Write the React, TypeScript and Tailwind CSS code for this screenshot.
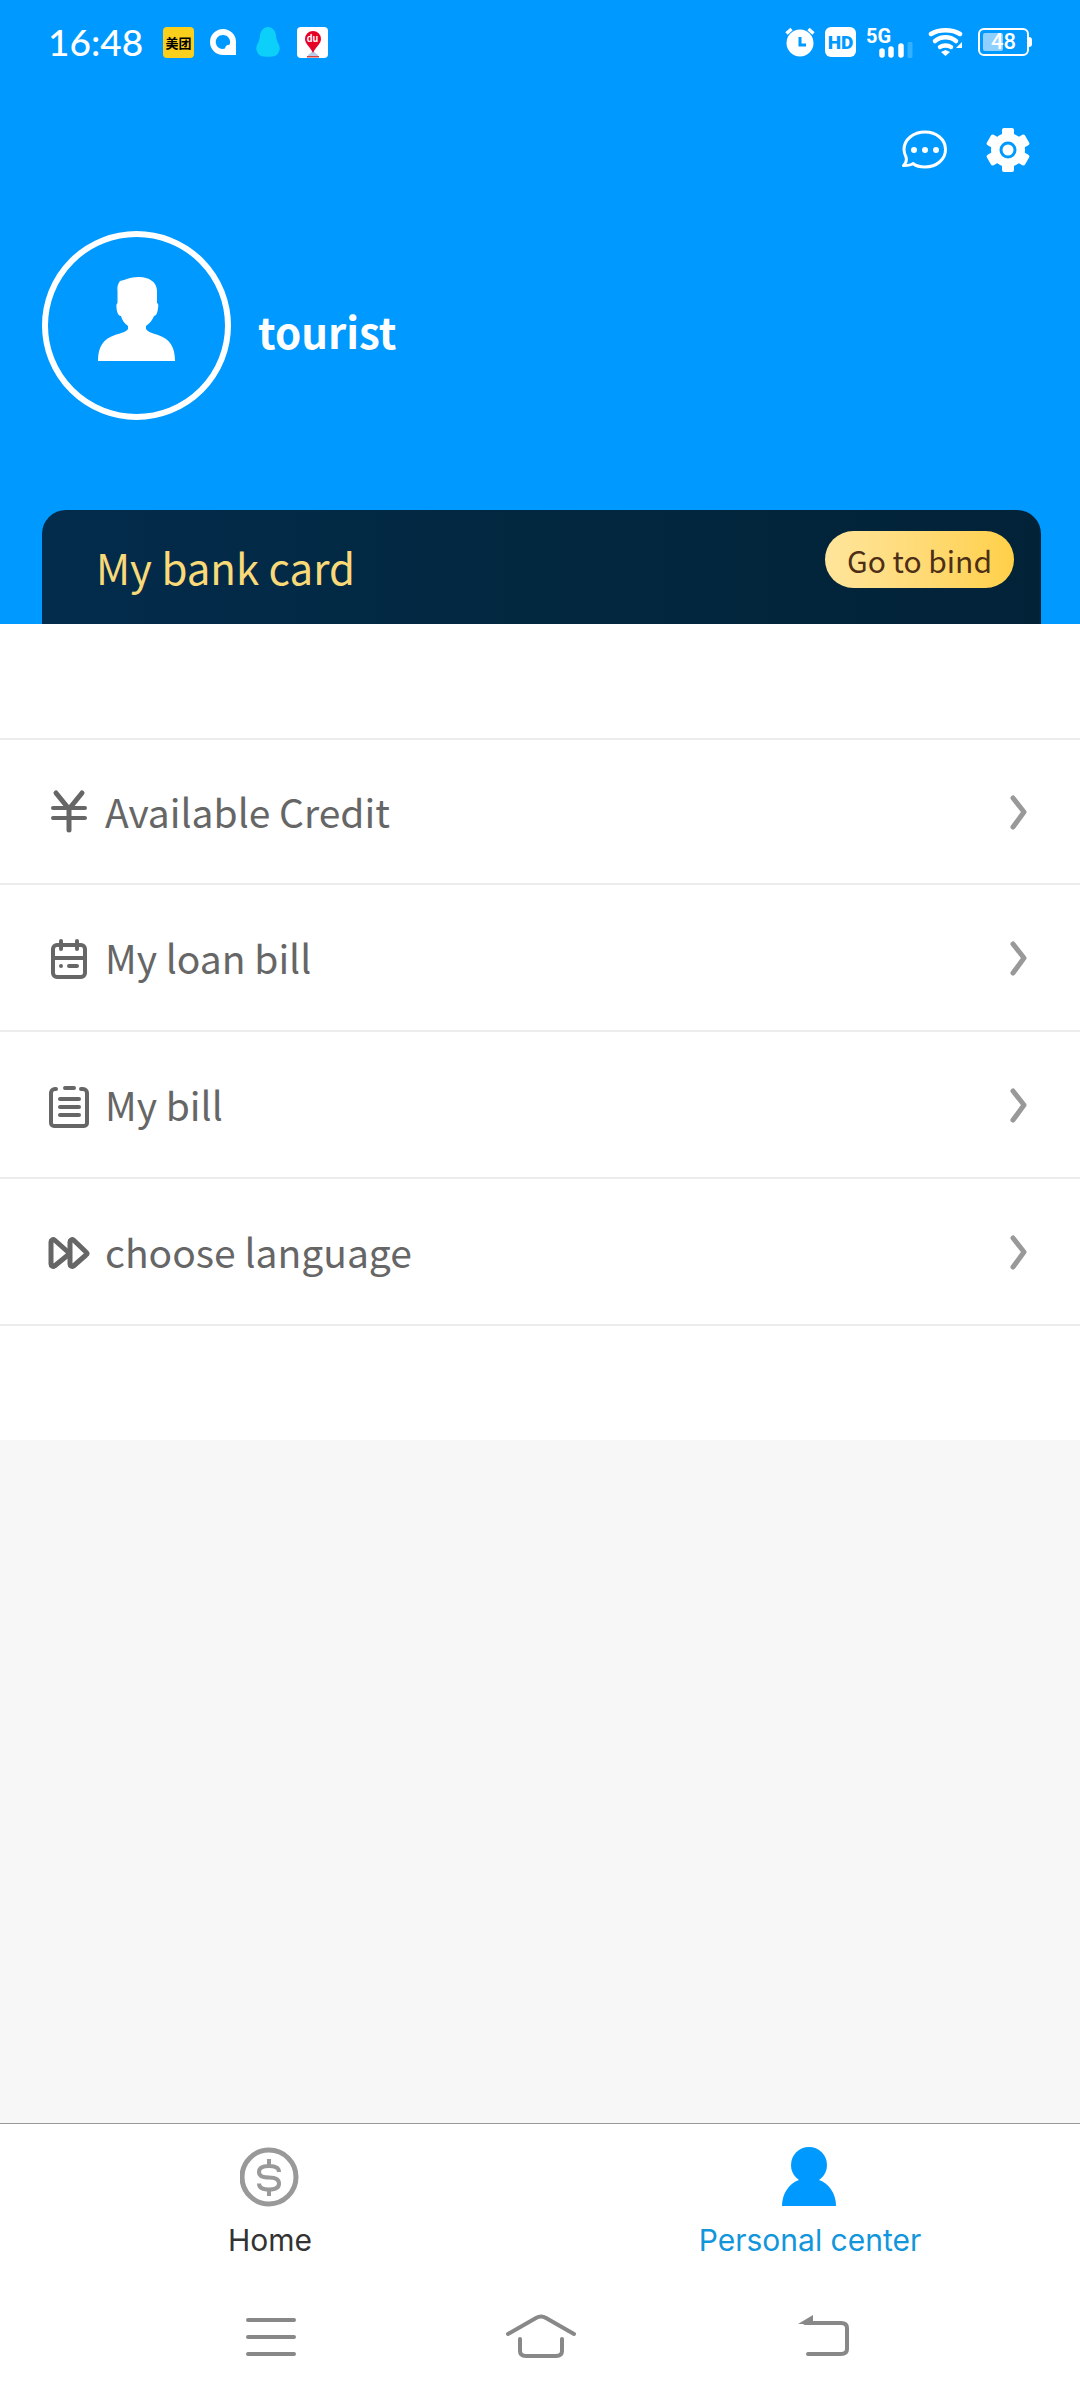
import clsx from 'clsx'

interface RowProps {
  label: string
  icon: React.ReactNode
}

function StatusBar() {
  return (
    <div className="flex h-[84px] items-center justify-between px-12 text-white">
      <div className="flex items-center">
        <span className="w-[115px] font-['Lato','Liberation_Sans',sans-serif] text-[37px] leading-10 font-medium">16:48</span>
        <span className="flex size-[31px] items-center justify-center rounded-sm bg-[#fbd01c] font-['Noto_Sans_CJK_SC',sans-serif] text-[13px] leading-none font-bold text-black">
          美团
        </span>
        <svg className="ml-4 h-[26px] w-[26px]" viewBox="0 0 26 26">
          <path
            fill="currentColor"
            fillRule="evenodd"
            d="M13 0a13 13 0 0 1 13 13v13H13A13 13 0 0 1 13 0Zm0 6a7 7 0 1 0 2 13.600c.2-2.500 2-4 4.500-3.800A7 7 0 0 0 13 6Z"
          />
        </svg>
        <svg className="ml-5 h-8 w-6" viewBox="0 0 24 32">
          <path
            fill="#0cd0fa"
            d="M12 1c4 0 7 3 8 8 0 3 1 6 3 10 1 3 1 5 0 6-1 3-2 4-4 5-2 1-12 1-14 0-2-1-3-2-4-5-1-1-1-3 0-6 2-4 3-7 3-10 1-5 4-8 8-8Z"
          />
        </svg>
        <span className="relative ml-[17px] flex size-[31px] justify-center rounded-sm bg-white">
          <svg className="mt-1 h-[27px] w-[18px]" viewBox="0 0 18 27">
            <path fill="#b9cbe6" d="M4 24l5-4 5 4v2H4Z" />
            <path fill="#d6433c" d="M3 25h12v1.500H3Z" />
            <path fill="#e60026" d="M9 0a8 8 0 0 1 8 8c0 5-5.500 8-8 14C6.500 16 1 13 1 8a8 8 0 0 1 8-8Z" />
          </svg>
          <span className="absolute top-[7px] text-[9px] leading-[9px] font-bold">du</span>
        </span>
      </div>

      <div className="flex items-center">
        <svg className="h-[30px] w-[30px]" viewBox="0 0 30 30">
          <circle cx="15" cy="16" r="13.500" fill="currentColor" />
          <path d="M1.500 6.500l5-4.500M28.500 6.500l-5-4.500" stroke="currentColor" strokeWidth="3.500" />
          <path d="M15 10v8h6" fill="none" stroke="#0099ff" strokeWidth="3" />
        </svg>
        <span className="ml-[10px] flex h-[30px] w-[31px] items-center justify-center rounded-md bg-white font-['Roboto',sans-serif] text-[19px] leading-none font-black text-[#0099ff]">
          HD
        </span>
        <span className="relative ml-[10px] h-8 w-[50px] font-['Roboto',sans-serif] text-[20px] leading-5 font-bold">
          5G
          <svg className="absolute right-0 bottom-0 h-4 w-[37px]" viewBox="0 0 37 16">
            <path d="M3 9v4M12 7v6M22 4v9" stroke="currentColor" strokeWidth="5.500" strokeLinecap="round" />
            <path d="M31 2v12" stroke="#33b0ff" strokeWidth="5" strokeLinecap="round" />
          </svg>
        </span>
        <svg className="ml-3 h-7 w-[36px]" viewBox="0 0 36 28">
          <g fill="none" stroke="currentColor" strokeWidth="4.500" strokeLinecap="round">
            <path d="M3 6c8-5 21-5 29 0" />
            <path d="M7 13c6-5 15-5 21 0" />
            <path d="M12 19c3-2 8-2 11 0" />
          </g>
          <path d="M13 24l4.500-2 4.500 2-4.500 4Z" fill="currentColor" />
          <path d="M34 14v6h-6Z" fill="currentColor" />
        </svg>
        <span className="relative ml-[14px] flex h-7 w-[51px] items-center justify-center overflow-hidden rounded-md border-2 border-white font-['Roboto',sans-serif] text-[22px] leading-none font-medium">
          <span className="absolute top-[3px] left-[3px] h-[18px] w-5 rounded-xs bg-[#8fd0ff]" />
          <span className="relative">48</span>
        </span>
        <span className="h-[10px] w-[3px] rounded-r-sm bg-white" />
      </div>
    </div>
  )
}

function Header() {
  return (
    <header className="bg-[#0099ff]">
      <StatusBar />

      {/* Message and settings */}
      <div className="flex items-center justify-end gap-[39px] pt-11 pr-[50px] text-white">
        <button aria-label="Messages" className="h-11 w-[46px]">
          <svg className="h-11 w-[46px]" viewBox="0 0 46 44">
            <path
              d="M24 4c11.500 0 20.500 7.500 20.500 17.500S35.500 39 24 39c-5 0-9-1-12-3.500-2 2-5 2-9.500 2C5 35 6 32 5 29c-1-2-2-4-2-7.500C3 11.500 12.500 4 24 4Z"
              fill="none"
              stroke="currentColor"
              strokeWidth="3"
              strokeLinejoin="round"
            />
            <g fill="currentColor">
              <circle cx="13" cy="22" r="3" />
              <circle cx="24" cy="22" r="3" />
              <circle cx="35" cy="22" r="3" />
            </g>
          </svg>
        </button>
        <button aria-label="Settings" className="size-11">
          <svg className="size-11" viewBox="0 0 44 44">
            <g fill="currentColor">
              <circle cx="22" cy="22" r="17" />
              <rect x="16" y="0" width="12" height="44" rx="2" />
              <rect x="16" y="0" width="12" height="44" rx="2" transform="rotate(60 22 22)" />
              <rect x="16" y="0" width="12" height="44" rx="2" transform="rotate(120 22 22)" />
            </g>
            <circle cx="22" cy="22" r="7" fill="none" stroke="#0099ff" strokeWidth="3" />
          </svg>
        </button>
      </div>

      {/* Profile */}
      <div className="flex items-center gap-[27px] pt-[59px] pl-[42px]">
        <div className="flex size-[189px] items-center justify-center rounded-full border-6 border-white pb-[14px]">
          <svg className="h-[84px] w-[78px] text-white" viewBox="0 0 78 84">
            <path
              fill="currentColor"
              d="M22 4l4-1c5-2 9-3 15-3 10 0 18 5 18 14v12c1.500 1 1.500 2 1 5-.4 4-1.500 8-4 8-1.500 4-4 7-8 10v3c2 3 6 4 12 6 12 4 17 12 17 26H0c0-14 5-22 17-26 6-2 11-3 13-6v-3c-4-3-6-6-7-10-3 0-4-4-4.500-8-.3-3 0-4 1-5V14c-.5-3 0-7 2.500-10Z"
            />
          </svg>
        </div>
        <h1 className="pt-[10px] text-[42px] leading-[60px] font-bold text-white">tourist</h1>
      </div>

      {/* Bank card */}
      <div className="mt-[90px] mr-[39px] ml-[42px] flex h-[114px] items-start justify-between rounded-t-3xl bg-linear-to-r from-[#032b4c] via-[#02283f] to-[#022238] pt-[21px] pr-[27px] pl-[54px]">
        <h2 className="pt-1 text-[42px] leading-[64px] text-[#f9d978]">My bank card</h2>
        <button className="h-[57px] rounded-full bg-linear-to-r from-[#ffe59b] to-[#ffd047] px-[22px] text-[30px] leading-[56px] text-[#4c2f16]">
          Go to bind
        </button>
      </div>
    </header>
  )
}

function Row({ label, icon }: RowProps) {
  return (
    <li className="h-[147px] border-b-2 border-[#ececec] first:border-t-2">
      <a href="#" className="flex h-full items-center pr-[51px] pl-12 text-[#666]">
        {icon}
        <span className="ml-[15px] flex-1 pb-[2px] text-[39px] leading-[60px]">{label}</span>
        <svg className="h-9 w-5" viewBox="0 0 20 36">
          <path
            d="M4 4l11 14L4 33"
            fill="none"
            stroke="#999"
            strokeWidth="5"
            strokeLinecap="round"
            strokeLinejoin="round"
          />
        </svg>
      </a>
    </li>
  )
}

const iconProps = {
  className: 'h-[46px] w-[42px]',
  viewBox: '0 -4 42 46',
  fill: 'none',
  stroke: 'currentColor',
  strokeWidth: 4,
  strokeLinecap: 'round',
  strokeLinejoin: 'round',
} as const

const rows: RowProps[] = [
  {
    label: 'Available Credit',
    icon: (
      <svg {...iconProps}>
        <path d="M8 0l13 16L34 0M21 16v21" strokeWidth="5" />
        <path d="M5 15h32M5 25h32" />
      </svg>
    ),
  },
  {
    label: 'My loan bill',
    icon: (
      <svg {...iconProps}>
        <rect x="5" y="6" width="32" height="32" rx="4" />
        <path d="M5 19h32M13 2v8M29 2v8M13 27h0M21 27h8" />
      </svg>
    ),
  },
  {
    label: 'My bill',
    icon: (
      <svg {...iconProps}>
        <path d="M8 3H7a4 4 0 0 0-4 4v30a3 3 0 0 0 3 3h30a3 3 0 0 0 3-3V7a4 4 0 0 0-4-4h-2" />
        <path d="M17 2h9M12 13h19M12 21h19M12 29h19" />
      </svg>
    ),
  },
  {
    label: 'choose language',
    icon: (
      <svg {...iconProps}>
        <path d="M3 9c0-2 2-3 3.500-2L20 19c1.500 1 1.500 2 0 3L6.500 33C5 34 3 33 3 31Z" strokeWidth="5" />
        <path d="M22 9c0-2 2-3 3.500-2L38 19c1.500 1 1.500 2 0 3L25.500 33c-1.500 1-3.500 0-3.500-2Z" strokeWidth="5" />
      </svg>
    ),
  },
]

function Tab({ label, active, icon }: { label: string; active?: boolean; icon: React.ReactNode }) {
  return (
    <a
      href="#"
      className={clsx(
        "flex flex-1 flex-col items-center gap-[11px] pt-[23px] font-['Inter','Roboto',sans-serif] text-[30px] leading-10",
        active ? 'text-[#1296db]' : 'text-[#333]'
      )}
    >
      {icon}
      {label}
    </a>
  )
}

function SystemNav() {
  return (
    <div className="flex h-[120px] items-start justify-between px-[231px] pt-7 text-[#888]">
      <button aria-label="Recent apps">
        <svg className="h-14 w-20" viewBox="0 0 80 56" fill="none" stroke="currentColor" strokeWidth="4" strokeLinecap="round">
          <path d="M17 12h46M17 29h46M17 46h46" />
        </svg>
      </button>
      <button aria-label="Home screen">
        <svg className="h-14 w-20" viewBox="0 0 80 56" fill="none" stroke="currentColor" strokeWidth="4" strokeLinecap="round">
          <path d="M8 26L36 10q5-3 10 0l28 16" />
          <path d="M20 31v12q0 5 6 5h30q6 0 6-5V31" />
        </svg>
      </button>
      <button aria-label="Back">
        <svg className="h-14 w-20" viewBox="0 0 80 56" fill="none" stroke="currentColor" strokeWidth="4" strokeLinecap="round">
          <path d="M36 15h36q6 0 6 5v21q0 5-6 5H39" />
          <path d="M29 16L44 7v9Z" fill="currentColor" stroke="none" />
        </svg>
      </button>
    </div>
  )
}

export default function App() {
  return (
    <div className="flex min-h-screen flex-col bg-[#f7f7f7] font-['Noto_Sans_CJK_SC','Noto_Sans',sans-serif]">
      <Header />

      <main className="bg-white py-[114px]">
        <ul>
          {rows.map((row) => (
            <Row key={row.label} {...row} />
          ))}
        </ul>
      </main>

      {/* Bottom bars */}
      <footer className="mt-auto border-t border-[#999] bg-white">
        <nav className="flex h-[156px]">
          <Tab
            label="Home"
            icon={
              <svg className="h-[62px] w-[60px]" viewBox="0 0 60 62" fill="none" stroke="#999" strokeWidth="5">
                <circle cx="29" cy="30" r="27" />
                <path
                  strokeWidth="4"
                  d="M29 12v6M29 43v6M39 25c0-4-4-6-10-6s-10 2-10 6 4 5.500 10 5.500 10 2 10 6-4 6-10 6-10-2-10-6"
                />
              </svg>
            }
          />
          <Tab
            label="Personal center"
            active
            icon={
              <svg className="h-[62px] w-[60px]" viewBox="0 0 60 62" fill="#0099ff">
                <circle cx="29" cy="18" r="18" />
                <path d="M19 33h20c10 3 17 14 17 26H2c0-12 7-23 17-26Z" />
              </svg>
            }
          />
        </nav>
        <SystemNav />
      </footer>
    </div>
  )
}
